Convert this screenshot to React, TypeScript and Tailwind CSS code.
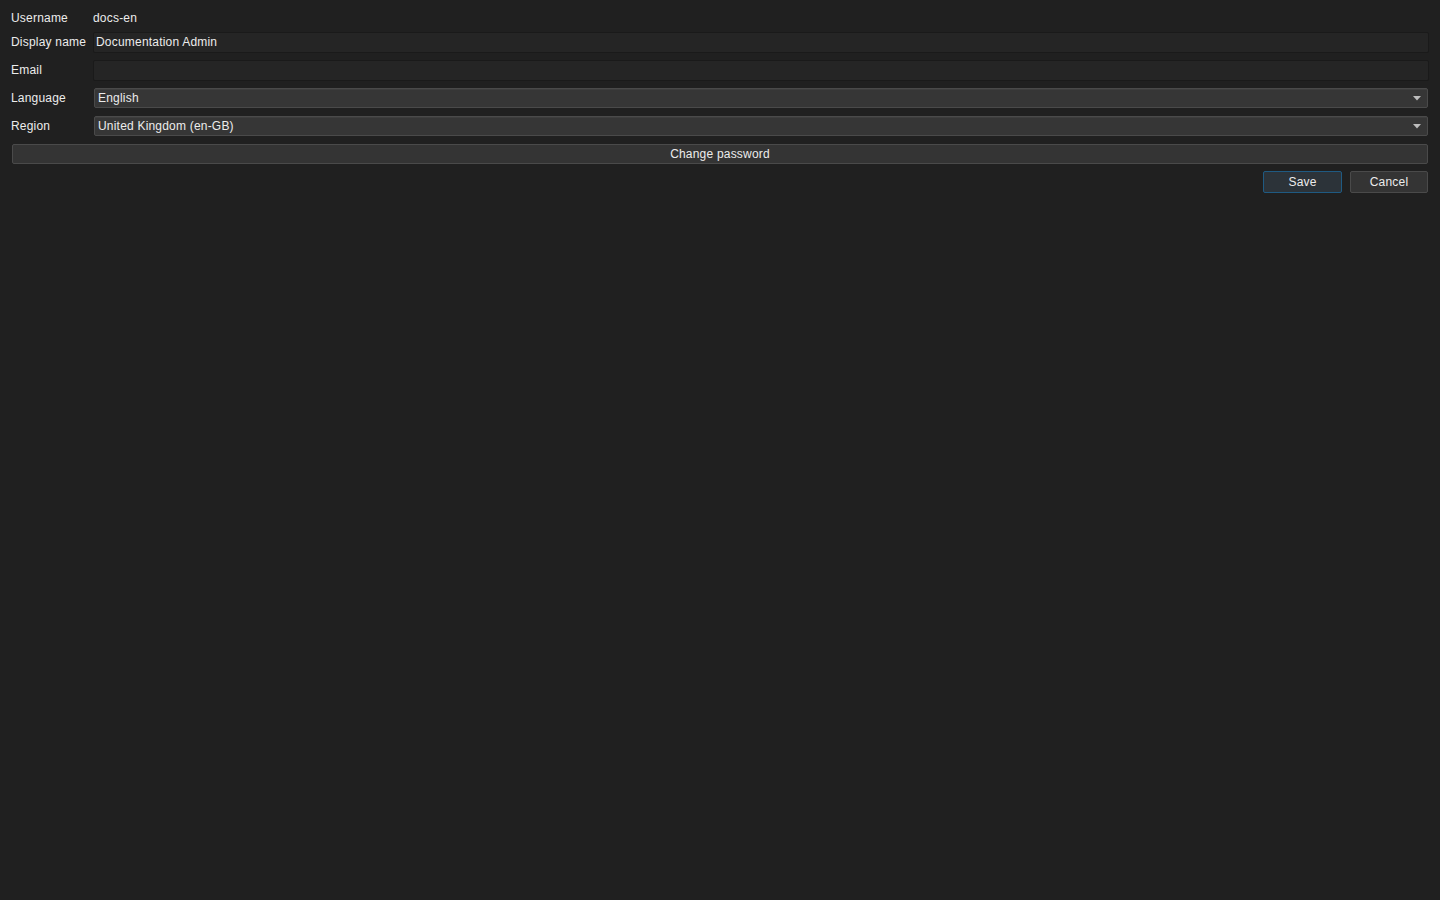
import { useState } from "react";

const font = { fontFamily: '"Liberation Sans", Arial, sans-serif' };

const Arrow = () => (
  <svg width="8" height="5" viewBox="0 0 8 5" className="shrink-0">
    <path d="M0 0 H8 L4 4.5 Z" fill="#bdbdbd" />
  </svg>
);

const Row = ({ label, children }: { label: string; children: React.ReactNode }) => (
  <div className="flex h-[28px] items-start pt-[4px]">
    <div className="w-[82px] shrink-0 pt-[3px] leading-[14px]">{label}</div>
    {children}
  </div>
);

const Select = ({ value }: { value: string }) => (
  <div className="mx-[1px] flex h-[20px] flex-1 items-center justify-between rounded-[2px] border border-[#4a4a4a] bg-[#363636] pl-[3px] pr-[6px] shadow-[inset_0_1px_0_#3e3e3e]">
    <span className="leading-[14px]">{value}</span>
    <Arrow />
  </div>
);

export default function App() {
  const [displayName, setDisplayName] = useState("Documentation Admin");
  const [email, setEmail] = useState("");

  return (
    <div
      style={font}
      className="min-h-screen w-full bg-[#202020] pl-[11px] pr-[11px] pt-[7px] text-[12px] tracking-[0.2px] text-[#ececec]"
    >
      {/* Username */}
      <div className="flex h-[21px] items-center">
        <div className="w-[82px] shrink-0">Username</div>
        <div>docs-en</div>
      </div>

      <Row label="Display name">
        <input
          value={displayName}
          onChange={(e) => setDisplayName(e.target.value)}
          className="h-[21px] flex-1 rounded-[2px] border border-[#1a1a1a] bg-[#252525] px-[2px] pb-[2px] text-[12px] tracking-[0.2px] text-[#ececec] outline-none"
        />
      </Row>

      <Row label="Email">
        <input
          value={email}
          onChange={(e) => setEmail(e.target.value)}
          className="h-[21px] flex-1 rounded-[2px] border border-[#1a1a1a] bg-[#252525] px-[2px] pb-[2px] text-[12px] text-[#ececec] outline-none"
        />
      </Row>

      <Row label="Language">
        <Select value="English" />
      </Row>

      <Row label="Region">
        <Select value="United Kingdom (en-GB)" />
      </Row>

      {/* Change password */}
      <div className="flex h-[28px] items-start pt-[4px]">
        <button className="mx-[1px] h-[20px] flex-1 rounded-[2px] border border-[#4a4a4a] bg-[#343434] text-[12px] leading-[14px] tracking-[0.2px] text-[#ececec]">
          Change password
        </button>
      </div>

      {/* Actions */}
      <div className="flex h-[28px] items-start justify-end gap-[8px] pr-[1px] pt-[3px]">
        <button className="h-[22px] w-[79px] rounded-[2px] border border-[#1f5a82] bg-[#2c3339] text-[12px] tracking-[0.2px] text-[#ececec]">
          Save
        </button>
        <button className="h-[22px] w-[78px] rounded-[2px] border border-[#4a4a4a] bg-[#343434] text-[12px] tracking-[0.2px] text-[#ececec]">
          Cancel
        </button>
      </div>
    </div>
  );
}
